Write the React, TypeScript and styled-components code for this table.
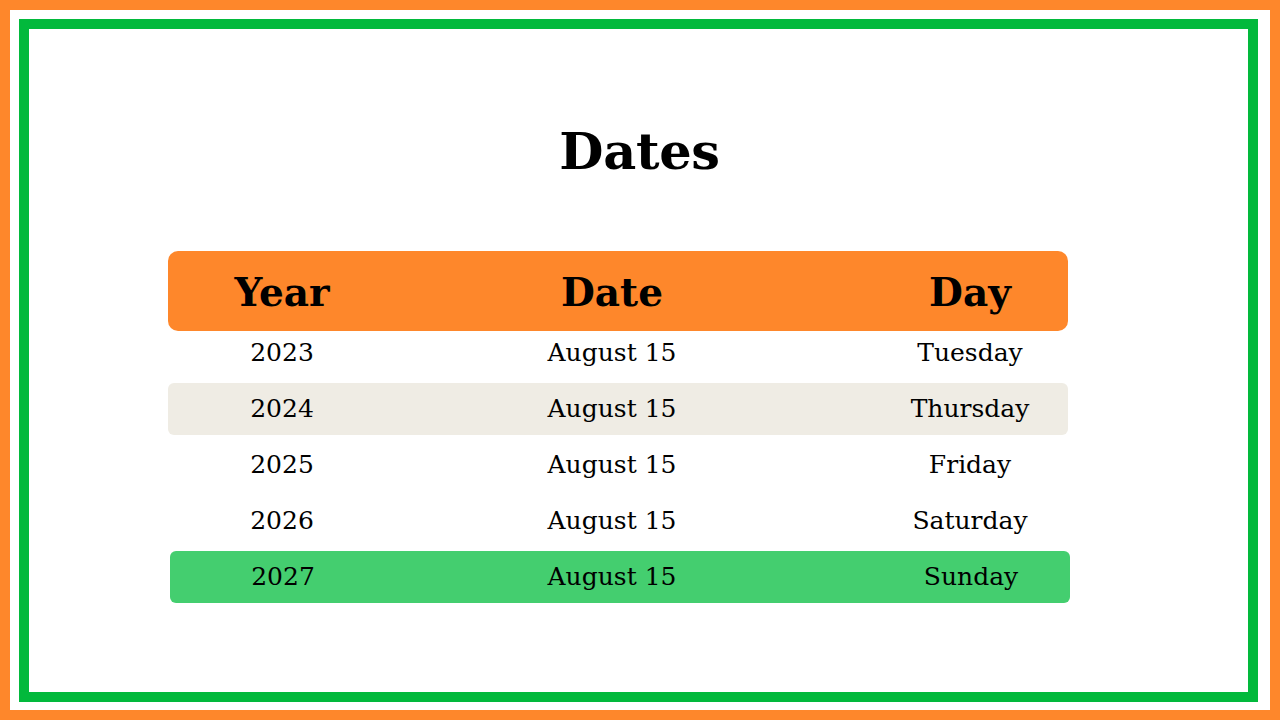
import React from "react";
import styled, { createGlobalStyle } from "styled-components";

const Global = createGlobalStyle`
  html, body { margin: 0; padding: 0; background: #ffffff; }
  body { font-family: "DejaVu Serif", "Liberation Serif", serif; color: #000; }
`;

const Frame = styled.div`
  box-sizing: border-box;
  width: 1280px;
  height: 720px;
  border: 10px solid #fe872b;
  padding: 9px 12px 8px 9px;
  background: #fff;
`;

const Inner = styled.div`
  box-sizing: border-box;
  height: 100%;
  border: 10px solid #02b93c;
  display: flex;
  flex-direction: column;
  align-items: center;
  padding-top: 92px;
`;

const Title = styled.h1`
  margin: 0;
  height: 60px;
  line-height: 60px;
  font-size: 51px;
  font-weight: 700;
  letter-spacing: -0.3px;
  margin-left: 2px;
`;

const Table = styled.div`
  margin-top: 70px;
  align-self: flex-start;
  margin-left: 139px;
  width: 904px;
  display: flex;
  flex-direction: column;
  gap: 4px;
`;

const Row = styled.div<{ $bg?: string; $shift?: number; $head?: boolean }>`
  display: grid;
  grid-template-columns: ${(p) => 228 - (p.$shift ?? 0)}px 432px 1fr;
  align-items: center;
  width: 900px;
  height: ${(p) => (p.$head ? "80px" : "52px")};
  margin-bottom: ${(p) => (p.$head ? "-8px" : "0")};
  margin-left: ${(p) => p.$shift ?? 0}px;
  background: ${(p) => p.$bg ?? "transparent"};
  border-radius: ${(p) => (p.$head ? "10px" : "6px")};
`;

const Cell = styled.div<{ $last?: boolean; $head?: boolean }>`
  text-align: center;
  white-space: nowrap;
  padding-left: ${(p) => (p.$last ? "44px" : "0")};
  font-size: ${(p) => (p.$head ? "39px" : "25px")};
  font-weight: ${(p) => (p.$head ? 700 : 400)};
  padding-top: ${(p) => (p.$head ? "2px" : "0")};
  margin-top: ${(p) => (p.$head ? "0" : "-1px")};
`;

const rows = [
  { y: "2023", d: "August 15", w: "Tuesday" },
  { y: "2024", d: "August 15", w: "Thursday", bg: "#efece4" },
  { y: "2025", d: "August 15", w: "Friday" },
  { y: "2026", d: "August 15", w: "Saturday" },
  { y: "2027", d: "August 15", w: "Sunday", bg: "#44ce6f", shift: 2 },
];

export default function App() {
  return (
    <>
      <Global />
      <Frame>
        <Inner>
          <Title>Dates</Title>
          <Table>
            <Row $head $bg="#fe872b">
              <Cell $head>Year</Cell>
              <Cell $head>Date</Cell>
              <Cell $head $last>Day</Cell>
            </Row>
            {rows.map((r) => (
              <Row key={r.y} $bg={r.bg} $shift={r.shift}>
                <Cell>{r.y}</Cell>
                <Cell>{r.d}</Cell>
                <Cell $last>{r.w}</Cell>
              </Row>
            ))}
          </Table>
        </Inner>
      </Frame>
    </>
  );
}
